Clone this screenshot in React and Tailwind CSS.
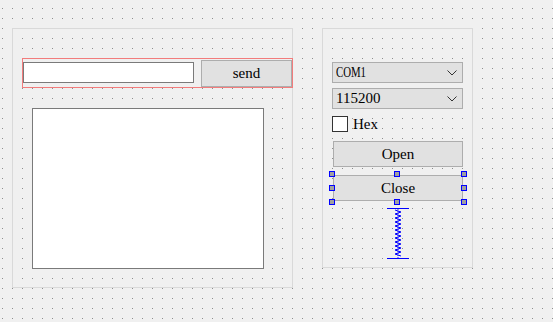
import React from 'react';

const serif = { fontFamily: '"Liberation Serif", "DejaVu Serif", serif' };

const btn = 'flex items-center justify-center bg-[#e1e1e1] border border-[#adadad] text-[15px] text-black';
const combo = 'flex items-center justify-between w-[131px] h-[21px] bg-[#e1e1e1] border border-[#adadad] pl-[3px] pr-[5px] text-[15px] text-black';

function Chevron() {
  return (
    <svg width="10" height="6" viewBox="0 0 10 6" className="shrink-0">
      <polyline points="0.5,0.5 5,5 9.5,0.5" fill="none" stroke="#333" strokeWidth="1" />
    </svg>
  );
}

function Handle({ className }) {
  return <div className={`absolute w-[6px] h-[6px] bg-[#a0a0a0] border border-[#0000ff] ${className}`} />;
}

function Spring() {
  const pts = [];
  for (let y = 2; y <= 49; y += 2) pts.push(`${y % 4 === 2 ? 8 : 14},${y}`);
  return (
    <svg width="22" height="51" viewBox="0 0 22 51">
      <line x1="0" y1="0.5" x2="22" y2="0.5" stroke="#0000ff" />
      <line x1="0" y1="50.5" x2="22" y2="50.5" stroke="#0000ff" />
      <polyline points={pts.join(' ')} fill="none" stroke="#0000ff" strokeWidth="1" />
      <line x1="11" y1="1" x2="11" y2="50" stroke="#0000ff" strokeDasharray="1 1" strokeWidth="0.8" />
    </svg>
  );
}

export default function App() {
  return (
    <div
      style={serif}
      className="w-[553px] h-[322px] overflow-hidden flex items-start gap-[29px] pl-[12px] pt-[28px] bg-[#f0f0f0] bg-[conic-gradient(at_1px_1px,transparent_270deg,#8e8e8e_0)] bg-[length:10px_10px] bg-[position:2px_8px]"
    >
      {/* left frame */}
      <div className="w-[281px] h-[260px] shrink-0 border border-[#d9d9d9] flex flex-col pl-[9px] pt-[29px]">
        <div className="w-[271px] h-[30px] shrink-0 border border-[#f27c7c] flex items-start">
          <div className="w-[171px] h-[21px] mt-[3px] bg-white border border-[#7a7a7a]" />
          <div className={`${btn} w-[91px] h-[27px] mt-[1px] ml-[7px]`}>send</div>
        </div>
        <div className="w-[232px] h-[161px] mt-[20px] ml-[10px] bg-white border border-[#7a7a7a]" />
      </div>

      {/* right frame */}
      <div className="w-[151px] h-[240px] shrink-0 border border-[#d9d9d9] flex flex-col pl-[9px] pt-[33px]">
        <div className={combo}>
          <span className="inline-block origin-left scale-x-[0.72]">COM1</span>
          <Chevron />
        </div>
        <div className={`${combo} mt-[5px]`}>
          <span>115200</span>
          <Chevron />
        </div>
        <label className="flex items-center gap-[5px] mt-[7px] h-[16px] text-[15px] text-black">
          <span className="w-[16px] h-[16px] bg-white border border-[#333333]" />
          Hex
        </label>
        <div className={`${btn} w-[130px] h-[26px] mt-[9px] ml-[1px]`}>Open</div>
        <div className="relative w-[130px] h-[26px] mt-[8px] ml-[1px]">
          <div className={`${btn} w-full h-full`}>Close</div>
          <Handle className="-left-[4px] -top-[4px]" />
          <Handle className="left-[61px] -top-[4px]" />
          <Handle className="-right-[4px] -top-[4px]" />
          <Handle className="-left-[4px] top-[10px]" />
          <Handle className="-right-[4px] top-[10px]" />
          <Handle className="-left-[4px] -bottom-[4px]" />
          <Handle className="left-[61px] -bottom-[4px]" />
          <Handle className="-right-[4px] -bottom-[4px]" />
        </div>
        <div className="flex justify-center w-[130px] ml-[1px] mt-[7px]">
          <Spring />
        </div>
      </div>
    </div>
  );
}
